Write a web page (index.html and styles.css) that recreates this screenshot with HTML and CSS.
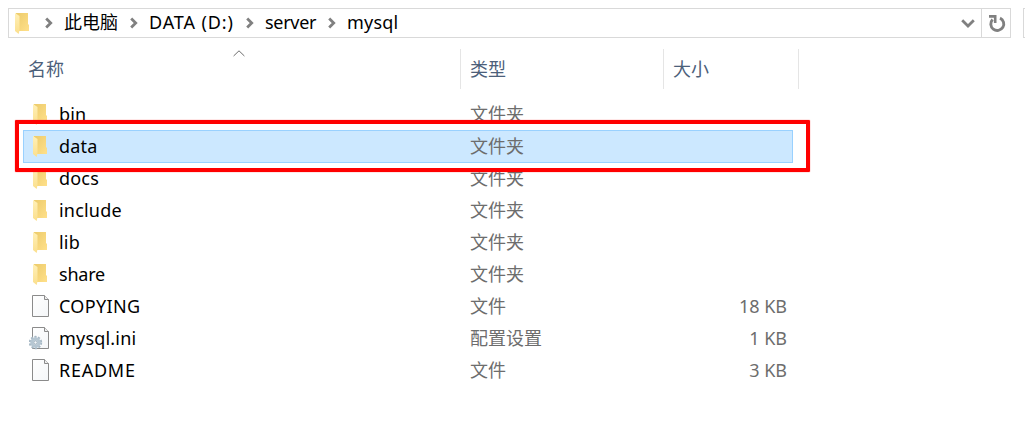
FILE: index.html
```html
<!DOCTYPE html>
<html lang="zh-CN">
<head>
<meta charset="utf-8">
<title>mysql</title>
<link rel="stylesheet" href="styles.css">
</head>
<body>
<svg class="defs" width="0" height="0" aria-hidden="true">
  <defs>
    <linearGradient id="back" x1="0" y1="0" x2="1" y2="1"><stop offset="0" stop-color="#eccb6b"/><stop offset="1" stop-color="#ffe08a"/></linearGradient>
    <linearGradient id="front" x1="0" y1="0" x2="0" y2="1"><stop offset="0" stop-color="#fff0b8"/><stop offset="1" stop-color="#fbdf8c"/></linearGradient>
    <linearGradient id="paper" x1="0" y1="0" x2="1" y2="1"><stop offset="0" stop-color="#fff"/><stop offset="1" stop-color="#f4f6f8"/></linearGradient>
    <symbol id="folder" viewBox="0 0 14 21">
      <path d="M1 0H13V11L14 12V18H2Z" fill="url(#back)"/>
      <path d="M0 0L4.500 3V17L3.700 21L0 18Z" fill="url(#front)"/>
    </symbol>
    <symbol id="file" viewBox="0 0 17 22">
      <path d="M.5.5H12.500L16.500 4.500V21.500H.5Z" fill="url(#paper)" stroke="#8b8b8b"/>
      <path d="M12.500.5V4.500H16.500" fill="#eee" stroke="#8b8b8b"/>
    </symbol>
    <symbol id="gear" viewBox="0 0 14 15">
      <circle cx="6.500" cy="7.500" r="5.700" fill="none" stroke="#a5b7c4" stroke-width="2" stroke-dasharray="2.200 1.380"/>
      <circle cx="6.500" cy="7.500" r="3.700" fill="#e6eef3" stroke="#b5c6d2" stroke-width="3"/>
      <circle cx="6.500" cy="7.500" r="1.700" fill="#f4f7f9" stroke="#8ca0ae" stroke-width=".8"/>
    </symbol>
    <symbol id="chevron" viewBox="0 0 8 12"><path d="M1.200 1.500L5.700 6L1.200 10.500" fill="none" stroke="#808080" stroke-width="2.800"/></symbol>
  </defs>
</svg>
<div class="window">
  <header class="toolbar">
    <nav class="address">
      <svg class="folder"><use href="#folder"/></svg>
      <svg class="chevron"><use href="#chevron"/></svg><span class="crumb pc">此电脑</span>
      <svg class="chevron"><use href="#chevron"/></svg><span class="crumb drive">DATA (D:)</span>
      <svg class="chevron"><use href="#chevron"/></svg><span class="crumb server">server</span>
      <svg class="chevron"><use href="#chevron"/></svg><span class="crumb leaf">mysql</span>
      <svg class="drop" viewBox="0 0 14 9"><path d="M1.200 1.300L7 7L12.800 1.300" fill="none" stroke="#808080" stroke-width="2.800"/></svg>
      <span class="refresh"><svg width="18" height="18" viewBox="0 0 18 18"><path d="M12 3.100A6.500 6.500 0 1 1 4.600 4.500" fill="none" stroke="#808080" stroke-width="2.900"/><path d="M1 1.400H7.200V8" fill="none" stroke="#808080" stroke-width="2.600"/></svg></span>
    </nav>
    <div class="search"></div>
  </header>
  <div class="columns">
    <div class="column name">名称<svg class="sort" viewBox="0 0 12 7"><path d="M.6 6L6 .8L11.400 6" fill="none" stroke="#6d6d6d"/></svg></div>
    <div class="column type">类型</div>
    <div class="column size">大小</div>
  </div>
  <main class="files">
    <div class="row"><svg class="folder"><use href="#folder"/></svg><span class="filename">bin</span><span class="kind">文件夹</span></div>
    <div class="row selected"><svg class="folder"><use href="#folder"/></svg><span class="filename">data</span><span class="kind">文件夹</span></div>
    <div class="row"><svg class="folder"><use href="#folder"/></svg><span class="filename">docs</span><span class="kind">文件夹</span></div>
    <div class="row"><svg class="folder"><use href="#folder"/></svg><span class="filename">include</span><span class="kind">文件夹</span></div>
    <div class="row"><svg class="folder"><use href="#folder"/></svg><span class="filename">lib</span><span class="kind">文件夹</span></div>
    <div class="row"><svg class="folder"><use href="#folder"/></svg><span class="filename tight">share</span><span class="kind">文件夹</span></div>
    <div class="row"><svg class="file"><use href="#file"/></svg><span class="filename upper">COPYING</span><span class="kind">文件</span><span class="bytes">18 KB</span></div>
    <div class="row"><svg class="file"><use href="#file"/></svg><svg class="gear"><use href="#gear"/></svg><span class="filename">mysql.ini</span><span class="kind">配置设置</span><span class="bytes">1 KB</span></div>
    <div class="row"><svg class="file"><use href="#file"/></svg><span class="filename upper wide">README</span><span class="kind">文件</span><span class="bytes">3 KB</span></div>
    <div class="highlight"></div>
  </main>
</div>
</body>
</html>
```

FILE: styles.css
```css
* { box-sizing: border-box; }
body { margin: 0; background: #fff; color: #000; font: 18px/32px "Noto Sans", "Noto Sans CJK SC", sans-serif; }
svg { display: block; flex: none; }
.defs { position: absolute; }
.window { width: 1025px; height: 436px; overflow: hidden; padding-top: 8px; }
.toolbar { display: flex; height: 30px; padding-left: 8px; gap: 12px; }
.address { display: flex; flex: none; align-items: center; width: 1003px; border: 1px solid #d9d9d9; padding-left: 6px; }
.search { width: 20px; flex: none; border: 1px solid #d9d9d9; }
.folder { width: 14px; height: 21px; }
.chevron { width: 8px; height: 12px; margin-right: 11px; }
.address .folder { margin-right: 16px; }
.crumb { white-space: nowrap; line-height: 27px; height: 28px; }
.pc { width: 66px; }
.drive { width: 97px; letter-spacing: 0.9px; }
.server { width: 63px; letter-spacing: -0.3px; }
.leaf { letter-spacing: 0.2px; }
.drop { width: 14px; height: 9px; margin-left: auto; margin-right: 6px; }
.refresh { display: flex; width: 29px; height: 28px; border-left: 1px solid #d9d9d9; padding: 6px 0 0 6px; }
.columns { display: flex; height: 40px; margin-top: 11px; color: #4c607a; line-height: 41px; }
.column { border-right: 1px solid #e5e5e5; }
.name { width: 461px; padding-left: 28px; display: flex; }
.type { width: 203px; padding-left: 9px; }
.size { width: 135px; padding-left: 9px; }
.sort { width: 12px; height: 7px; margin: 1px 0 0 169px; }
.files { position: relative; margin-top: 9px; width: 770px; margin-left: 23px; }
.row { position: relative; display: grid; grid-template-columns: 36px 411px 200px 1fr; height: 32px; }
.row .folder { margin: 6px 0 0 10px; }
.file { width: 17px; height: 22px; margin: 5px 0 0 9px; }
.gear { position: absolute; left: 6px; top: 13px; width: 14px; height: 15px; }
.filename { white-space: nowrap; letter-spacing: 0.2px; }
.tight { letter-spacing: -0.2px; }
.upper { letter-spacing: 0.35px; }
.wide { letter-spacing: 0.75px; }
.kind, .bytes { color: #6d6d6d; }
.bytes { text-align: right; padding-right: 6px; white-space: nowrap; }
.selected::before { content: ""; position: absolute; z-index: -1; inset: 0 0 -1px; background: #cce8ff; border: 1px solid #99d1ff; }
.highlight { position: absolute; left: -8px; top: 22px; width: 795px; height: 52px; border: 4px solid #f00; box-shadow: 0 0 1px #f00; border-radius: 1px; }
```
